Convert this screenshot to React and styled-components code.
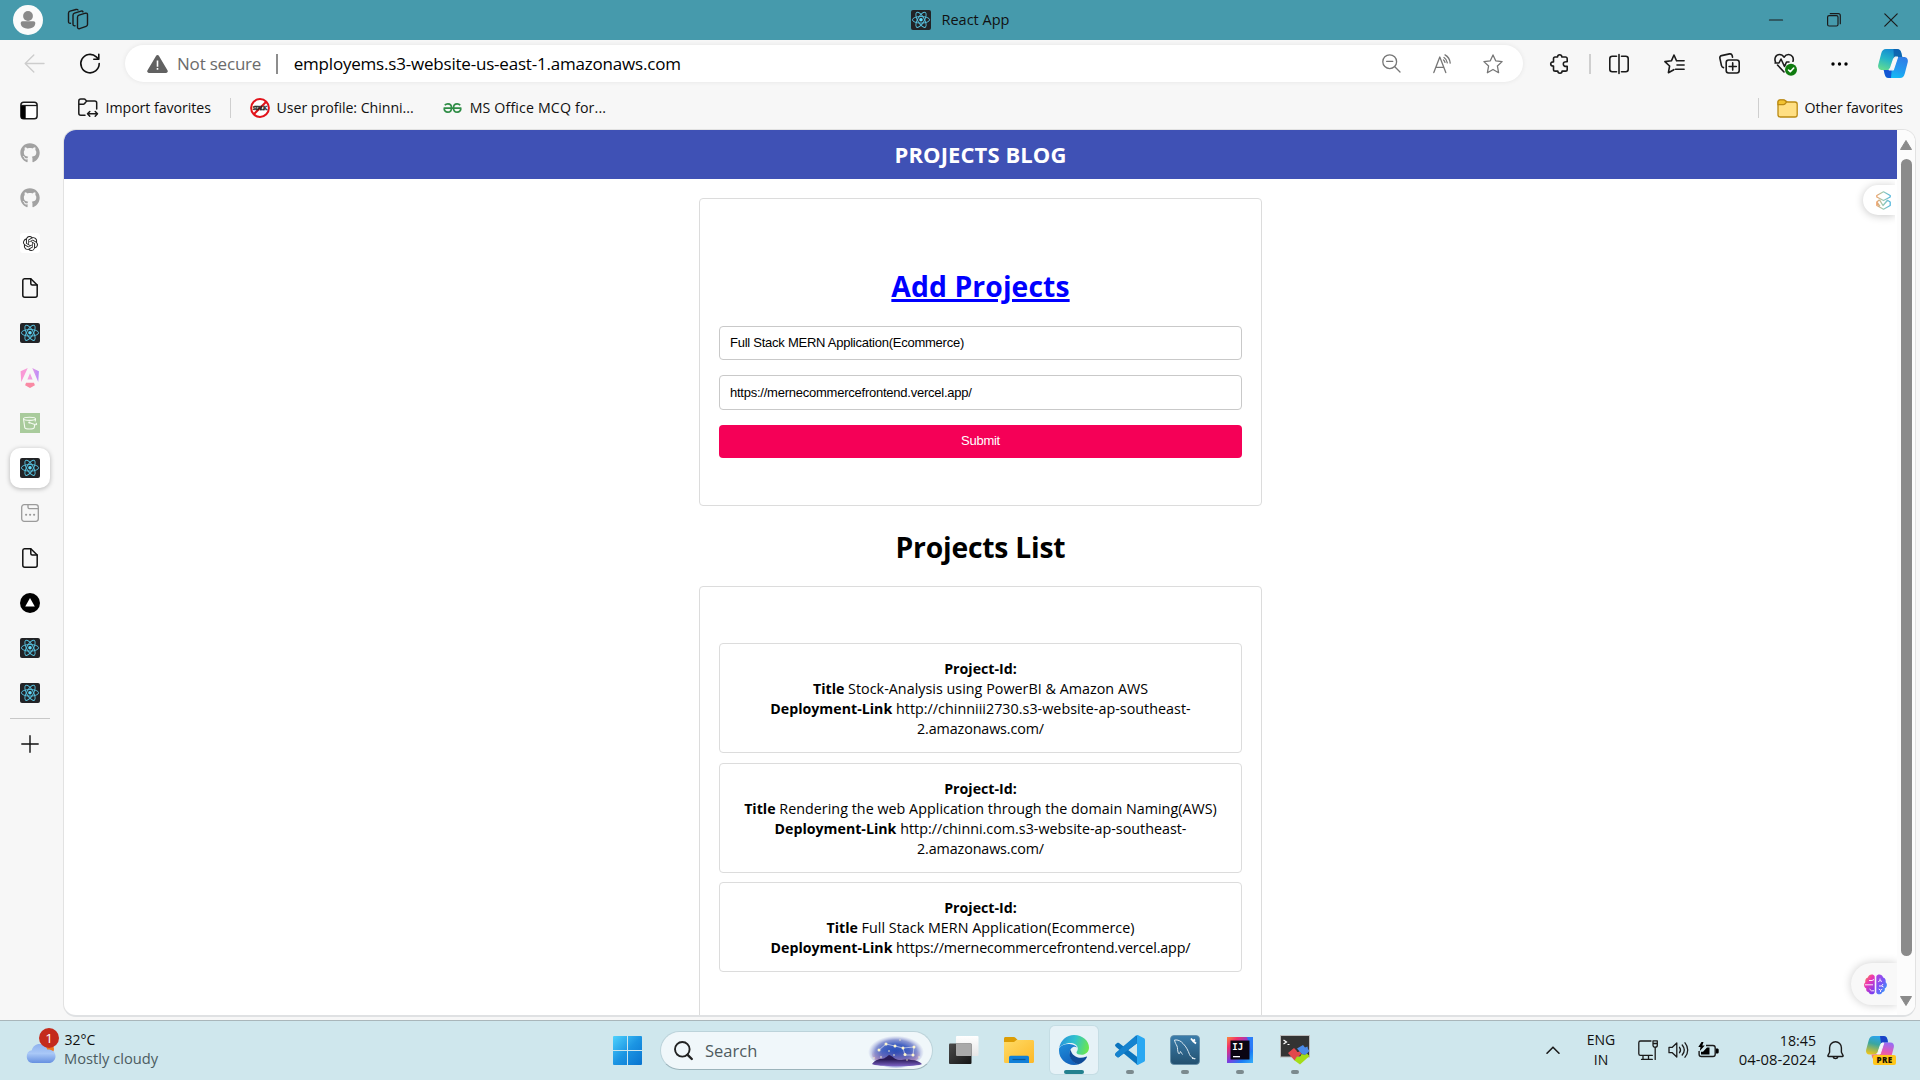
import React from "react";
import styled, { createGlobalStyle, css } from "styled-components";
import { FaGithub } from "react-icons/fa";
import { SiOpenai } from "react-icons/si";

const UI = '"Open Sans", "Noto Sans", sans-serif';

const Global = createGlobalStyle`
  *, *::before, *::after { box-sizing: border-box; }
  body { margin: 0; background: #f7f7f7; overflow: hidden; font-family: ${UI}; }
`;

const Window = styled.div`
  width: 1920px;
  height: 1080px;
  display: flex;
  flex-direction: column;
  overflow: hidden;
  background: #f7f7f7;
  color: #111;
`;

const Svg = styled.svg`
  flex: none;
  display: block;
  width: ${(p) => p.$w || 20}px;
  height: ${(p) => p.$h || p.$w || 20}px;
  margin-left: ${(p) => p.$ml || 0}px;
  overflow: visible;
`;

const Label = styled.span`
  flex: none;
  white-space: nowrap;
  font-size: ${(p) => p.$size || 14.2}px;
  letter-spacing: ${(p) => p.$ls || 0}px;
  color: ${(p) => p.$color || "#111"};
  margin-left: ${(p) => p.$ml || 0}px;
  padding-bottom: ${(p) => p.$pb || 0}px;
`;

const Rule = styled.i`
  flex: none;
  width: ${(p) => p.$w || 1}px;
  height: 20px;
  background: ${(p) => p.$color || "#cfcfcf"};
  margin-left: ${(p) => p.$ml || 0}px;
`;

const Spacer = styled.div`
  flex: 1;
`;

/* Title bar */
const TitleBar = styled.header`
  flex: none;
  height: 40px;
  background: #469aac;
  display: grid;
  grid-template-columns: 1fr auto 1fr;
  align-items: center;
`;
const TitleLeft = styled.div`
  display: flex;
  align-items: center;
  padding-left: 13px;
`;
const TitleCenter = styled.div`
  display: flex;
  align-items: center;
  gap: 11px;
`;
const TitleRight = styled.div`
  display: flex;
  align-items: center;
  justify-content: flex-end;
  gap: 43.500px;
  padding-right: 22px;
`;

/* Toolbar */
const Toolbar = styled.div`
  flex: none;
  height: 48px;
  display: flex;
  align-items: center;
  padding: 0 0 1px 24px;
`;
const AddressBar = styled.div`
  flex: none;
  width: 1398px;
  height: 37px;
  margin-left: 25px;
  border-radius: 19px;
  background: #fff;
  box-shadow: 0 0 5px rgba(0, 0, 0, 0.08);
  display: flex;
  align-items: center;
  padding: 0 20px 0 22px;
`;

/* Favorites bar */
const Favorites = styled.nav`
  flex: none;
  height: 42px;
  display: flex;
  align-items: center;
  padding: 0 17px 2px 20px;
`;

/* Body */
const Body = styled.div`
  flex: none;
  height: 890px;
  display: flex;
`;
const Sidebar = styled.aside`
  flex: none;
  width: 63px;
  display: flex;
  flex-direction: column;
  padding-left: 10px;
`;
const Tab = styled.div`
  flex: none;
  width: 40px;
  height: 40px;
  margin-top: ${(p) => (p.$first ? 3 : 5)}px;
  border-radius: 10px;
  display: flex;
  align-items: center;
  justify-content: center;
  ${(p) =>
    p.$active &&
    css`
      background: #fff;
      box-shadow: 0 1px 5px rgba(0, 0, 0, 0.28);
    `}
`;
const Faded = styled.span`
  display: flex;
  color: #a2a2a2;
  font-size: 20px;
`;
const AiBadge = styled.span`
  width: 20px;
  height: 20px;
  border-radius: 3px;
  background: #fff;
  display: flex;
  align-items: center;
  justify-content: center;
  font-size: 15px;
  color: #222;
`;
const SideRule = styled.div`
  width: 40px;
  height: 1px;
  margin: 5px 0 0;
  background: #c8c8c8;
`;
const NewTab = styled.div`
  width: 40px;
  margin-top: 16px;
  padding-right: 1px;
  display: flex;
  justify-content: center;
`;

const Page = styled.main`
  position: relative;
  width: 1853px;
  height: 888px;
  margin-top: -1px;
  border: 1px solid #e2e2e2;
  border-bottom: 2px solid #dfe1e3;
  border-radius: 13px;
  background: #fff;
  display: flex;
  overflow: hidden;
`;
const Viewport = styled.div`
  flex: none;
  width: 1833px;
  height: 885px;
  overflow: hidden;
  display: flex;
  flex-direction: column;
  align-items: center;
`;
const Banner = styled.h2`
  flex: none;
  align-self: stretch;
  height: 49px;
  margin: 0;
  background: #3f51b5;
  color: #fff;
  font-size: 22px;
  font-weight: 700;
  line-height: 48px;
  letter-spacing: 0.1px;
  text-align: center;
`;
const Card = styled.section`
  flex: none;
  width: 563px;
  height: ${(p) => p.$h}px;
  margin-top: ${(p) => p.$mt}px;
  padding: ${(p) => p.$pt}px 19px 0;
  border: 1px solid #dcdcdc;
  border-radius: 4px;
  background: #fff;
  display: flex;
  flex-direction: column;
`;
const Heading = styled.h1`
  margin: ${(p) => p.$mt || 0}px 0 0;
  height: 40px;
  line-height: 40px;
  font-size: 28.3px;
  font-weight: 700;
  text-align: center;
  letter-spacing: ${(p) => p.$ls || 0}px;
  color: ${(p) => (p.$link ? "#0000ff" : "#000")};
  ${(p) =>
    p.$link &&
    css`
      text-decoration: underline;
      text-decoration-thickness: 3px;
      text-underline-offset: 2px;
    `}
`;
const Field = styled.input`
  display: block;
  width: 523px;
  height: ${(p) => p.$h}px;
  margin: ${(p) => p.$mt}px 0 0;
  padding: 0 10px 1px;
  border: 1px solid #c9c9c9;
  border-radius: 4px;
  background: #fff;
  color: #000;
  font: 13px "Liberation Sans", Arial, sans-serif;
  letter-spacing: ${(p) => p.$ls}px;
`;
const Submit = styled.button`
  width: 523px;
  height: 33px;
  margin: 15px 0 0;
  padding: 0 0 2px;
  border: 0;
  border-radius: 4px;
  background: #f50057;
  color: #fff;
  font: 13px "Liberation Sans", Arial, sans-serif;
  letter-spacing: -0.25px;
`;
const Item = styled.article`
  flex: none;
  width: 523px;
  padding: 15px 15px 13px;
  margin-bottom: ${(p) => p.$mb}px;
  border: 1px solid #dcdcdc;
  border-radius: 4px;
  text-align: center;
  font-size: 14.3px;
  color: #000;
`;
const Line = styled.div`
  white-space: nowrap;
  height: 20px;
  line-height: 20px;
  letter-spacing: ${(p) => p.$ls || 0}px;
`;
const Bold = styled.strong`
  font-weight: 700;
  font-size: 14.2px;
  letter-spacing: 0;
`;

const Scrollbar = styled.div`
  flex: none;
  width: 18px;
  height: 885px;
  background: #fcfcfc;
  display: flex;
  flex-direction: column;
  align-items: center;
  padding: 10px 0 9px;
`;
const Thumb = styled.div`
  width: 11px;
  height: 797px;
  margin: 9px 0 40px;
  border-radius: 6px;
  background: #8b8b8b;
`;
const EdgeTag = styled.div`
  position: absolute;
  right: ${(p) => p.$right}px;
  top: ${(p) => p.$top}px;
  width: ${(p) => p.$w}px;
  height: ${(p) => p.$h}px;
  padding-left: ${(p) => p.$pl}px;
  border-radius: ${(p) => p.$h / 2}px 0 0 ${(p) => p.$h / 2}px;
  background: ${(p) => p.$bg};
  box-shadow: ${(p) => p.$shadow};
  clip-path: inset(-16px 0 -16px -16px);
  display: flex;
  align-items: center;
`;

/* Taskbar */
const Taskbar = styled.footer`
  flex: none;
  height: 60px;
  border-top: 1px solid #a9b6ba;
  background: #cfe7ed;
  display: flex;
  align-items: flex-start;
`;
const Weather = styled.div`
  position: relative;
  flex: none;
  width: 595px;
  height: 59px;
  padding: 9px 0 0 25px;
  display: flex;
  align-items: flex-start;
`;
const Stack = styled.div`
  display: flex;
  flex-direction: column;
  align-items: ${(p) => p.$align || "flex-start"};
  margin-left: ${(p) => p.$ml || 0}px;
  width: ${(p) => (p.$w ? p.$w + "px" : "auto")};
  line-height: ${(p) => p.$lh || 20}px;
  flex: none;
`;
const Alert = styled.b`
  position: absolute;
  left: 39px;
  top: 7px;
  width: 20px;
  height: 20px;
  border-radius: 50%;
  background: #c42b1c;
  color: #fff;
  font-size: 13.5px;
  font-weight: 400;
  line-height: 20px;
  text-align: center;
`;
const Slot = styled.div`
  position: relative;
  flex: none;
  width: ${(p) => p.$w || 55}px;
  height: 59px;
  display: flex;
  align-items: center;
  justify-content: center;
  padding: 0 ${(p) => p.$pr || 0}px ${(p) => p.$pb || 0}px 0;
`;
const ActiveTile = styled.div`
  width: 48px;
  height: 48px;
  border-radius: 5px;
  background: #e6f2f7;
  box-shadow: 0 0 0 1px rgba(190, 215, 222, 0.6);
  display: flex;
  align-items: center;
  justify-content: center;
`;
const Running = styled.i`
  position: absolute;
  left: 50%;
  bottom: 6px;
  width: ${(p) => p.$w || 8}px;
  height: 4px;
  border-radius: 2px;
  background: ${(p) => p.$color || "#7b8a8e"};
  transform: translateX(-50%);
`;
const SearchBox = styled.div`
  flex: none;
  width: 273px;
  height: 39px;
  margin-top: 10px;
  border-radius: 20px;
  background: #f0f7fa;
  border: 1px solid #bcd3da;
  border-bottom-color: #9cb4bb;
  display: flex;
  align-items: center;
  padding: 0 9px 0 13px;
`;
const Tray = styled.div`
  display: flex;
  align-items: center;
  height: 58px;
  flex: none;
`;
const PreviewLogo = styled.div`
  position: relative;
  width: 29px;
  height: 20px;
`;
const PreviewTag = styled.b`
  position: absolute;
  left: 7px;
  top: 19px;
  width: 23px;
  height: 10px;
  border-radius: 2px;
  background: #ffc61a;
  color: #1b1400;
  font-size: 8px;
  font-weight: 800;
  line-height: 10px;
  text-align: center;
  letter-spacing: 0.3px;
`;

const Stroke = ({ w = 20, h, ml, color = "#1b1b1b", sw = 1.4, children }) => (
  <Svg $w={w} $h={h} $ml={ml} viewBox={`0 0 ${w} ${h || w}`} fill="none" stroke={color} strokeWidth={sw} strokeLinecap="round" strokeLinejoin="round">
    {children}
  </Svg>
);

const ReactLogo = () => (
  <Svg $w={20} viewBox="0 0 20 20">
    <rect width="20" height="20" rx="2" fill="#222326" />
    <g fill="none" stroke="#56bfdc" strokeWidth="0.95">
      <ellipse cx="10" cy="9.8" rx="8.6" ry="3.3" />
      <ellipse cx="10" cy="9.8" rx="8.6" ry="3.3" transform="rotate(60 10 9.8)" />
      <ellipse cx="10" cy="9.8" rx="8.6" ry="3.3" transform="rotate(120 10 9.8)" />
    </g>
    <circle cx="10" cy="9.8" r="1.8" fill="#61dafb" />
  </Svg>
);

const FileIcon = () => (
  <Stroke w={20} sw={1.5} color="#111">
    <path d="M4.5.8h6.3L17.2 7v10.3a2 2 0 0 1-2 2H4.8a2 2 0 0 1-2-2V2.6a1.8 1.8 0 0 1 1.7-1.8Z" />
    <path d="M10.8.9v4.6a1.5 1.5 0 0 0 1.5 1.5h4.8" />
  </Stroke>
);

const CopilotLogo = ({ w, h, ml }) => (
  <Svg $w={w} $h={h} $ml={ml} viewBox="0 0 30 29">
    <defs>
      <linearGradient id="cpA" x1="0.6" y1="0" x2="0.2" y2="1">
        <stop offset="0" stopColor="#1387d2" />
        <stop offset="0.5" stopColor="#25b5c8" />
        <stop offset="1" stopColor="#63db90" />
      </linearGradient>
      <linearGradient id="cpB" x1="0.7" y1="0" x2="0.3" y2="1">
        <stop offset="0" stopColor="#2f7de6" />
        <stop offset="0.6" stopColor="#219df0" />
        <stop offset="1" stopColor="#12c0f5" />
      </linearGradient>
    </defs>
    <path d="M8 0h11c2.4 0 3.6 1.4 4.2 3.6L24.3 8H20c-1.8 0-2.8 1-3.3 2.6L14.5 17c-.8 2.6-1.8 4-4.5 4H4c-2.8 0-4.300-2.200-3.800-5L3.200 4.500C4 1.500 5.400 0 8 0Z" fill="url(#cpA)" />
    <path d="M15.5 0H19c2.400 0 3.600 1.400 4.200 3.600L24.300 8H20c-1.800 0-2.800 1-3.300 2.600L16 12.500Z" fill="#0b57a6" opacity=".75" />
    <path d="M22 29H11c-2.400 0-3.600-1.400-4.200-3.600L5.700 21H10c1.800 0 2.800-1 3.300-2.600L15.500 12c.8-2.600 1.800-4 4.500-4h6c2.800 0 4.300 2.200 3.800 5l-3 11.500C26 27.500 24.600 29 22 29Z" fill="url(#cpB)" />
    <path d="M11 29c-2.400 0-3.600-1.400-4.200-3.600L5.700 21H10c1.800 0 2.800-1 3.300-2.600l.7-1.900L13 29Z" fill="#1237c8" opacity=".75" />
    <path d="M17.200 8.200h2.300l-4.200 12.600h-4.100l1.300-1.600 3-9Z" fill="#f7f7f7" stroke="#f7f7f7" strokeWidth="1.200" strokeLinejoin="round" />
  </Svg>
);

const projects = [
  {
    gap: 10,
    title: "Stock-Analysis using PowerBI & Amazon AWS",
    link: ["http://chinniii2730.s3-website-ap-southeast-", "2.amazonaws.com/"],
    ls: 0.03,
  },
  {
    gap: 9,
    title: "Rendering the web Application through the domain Naming(AWS)",
    link: ["http://chinni.com.s3-website-ap-southeast-", "2.amazonaws.com/"],
    ls: 0.01,
  },
  {
    gap: 0,
    title: "Full Stack MERN Application(Ecommerce)",
    link: ["https://mernecommercefrontend.vercel.app/"],
    ls: -0.13,
  },
];

function TopBar() {
  return (
    <TitleBar>
      <TitleLeft>
        <Svg $w={30} viewBox="0 0 30 30">
          <circle cx="15" cy="15" r="15" fill="#fbfbfb" />
          <circle cx="15" cy="11" r="4.9" fill="#8a8a8a" />
          <path d="M9.5 16.300h11a1.800 1.800 0 0 1 1.800 1.800c0 3.600-3.300 5.700-7.300 5.700s-7.300-2.100-7.300-5.700a1.800 1.800 0 0 1 1.800-1.800Z" fill="#8a8a8a" />
        </Svg>
        <Stroke w={22} ml={24}>
          <path d="M10.5 8.200c0-1 .6-1.700 1.500-2l6.500-2c1.100-.3 2 .3 2 1.400v9.900c0 .9-.5 1.600-1.400 1.900l-6.500 2.200c-1.100.4-2.100-.2-2.100-1.400Z" />
          <path d="M8 16.800c-1.200.2-2-.4-2-1.500V6.200c0-1 .6-1.700 1.500-2l6.500-2c1-.3 1.700 0 2 .7" />
          <path d="M3.500 14.300c-1.200.2-2-.4-2-1.500V4.200c0-1 .6-1.700 1.500-2l6-1.700c1-.3 1.700 0 2 .5" />
        </Stroke>
      </TitleLeft>
      <TitleCenter>
        <ReactLogo />
        <Label $size={14.5} $pb={1}>React App</Label>
      </TitleCenter>
      <TitleRight>
        <Stroke w={14} sw={1.2}><path d="M.5 7h13" /></Stroke>
        <Stroke w={14} sw={1.2}>
          <rect x=".6" y="2.6" width="10.4" height="10.4" rx="1.5" />
          <path d="M3.300.7h8c1.200 0 2 .8 2 2v8" />
        </Stroke>
        <Stroke w={14} sw={1.2}><path d="M.8.8l12.400 12.400M13.200.8.8 13.200" /></Stroke>
      </TitleRight>
    </TitleBar>
  );
}

function AddressRow() {
  return (
    <Toolbar>
      <Stroke w={21} color="#cdcdcd"><path d="M20 10.500H1.200M9.800 2 1.200 10.500l8.600 8.500" /></Stroke>
      <Stroke w={20} h={21} ml={35} color="#111" sw={1.6}>
        <path d="M19.200 10.600A9.200 9.200 0 1 1 16.300 3.900l2.400 2.200M18.800 1.200v5h-5" />
      </Stroke>
      <AddressBar>
        <Svg $w={21} $h={18} viewBox="0 0 21 18">
          <path d="M9 .9a1.700 1.700 0 0 1 3 0l8.600 14.600a1.600 1.600 0 0 1-1.400 2.400H1.800a1.600 1.600 0 0 1-1.400-2.400Z" fill="#616161" />
          <path d="M9.700 5.500h1.600v6.200H9.700ZM9.700 13.100h1.600v1.700H9.700Z" fill="#fff" />
        </Svg>
        <Label $size={17} $ls={-0.2} $ml={9} $pb={1} $color="#6b6b6b">Not secure</Label>
        <Rule $w={2} $ml={15} $color="#8d8d8d" />
        <Label $size={17} $ls={-0.2} $ml={15.5} $pb={1} $color="#000">employems.s3-website-us-east-1.amazonaws.com</Label>
        <Spacer />
        <Stroke w={19} color="#767676" sw={1.3}>
          <circle cx="7.7" cy="7.7" r="6.9" />
          <path d="M12.800 12.800 18 18M4.600 7.300h6.200" />
        </Stroke>
        <Stroke w={20} ml={32} color="#767676" sw={1.3}>
          <path d="M.8 18.600 6.800 3l6 15.600M3 13.300h7.700M11 3.500c1.900 1.200 3 3 3.300 5.300M12 .9c3 1.700 4.900 4.500 5.200 8.200M10.500 6c.8.600 1.300 1.400 1.500 2.400" />
        </Stroke>
        <Stroke w={20} ml={30} color="#767676" sw={1.3}>
          <path d="M10 .9l2.700 5.900 6.400.8-4.700 4.400 1.200 6.700L10 15.500l-5.600 3.200 1.200-6.700L.9 7.600l6.400-.8Z" />
        </Stroke>
      </AddressBar>
      <Stroke w={20} ml={27} sw={1.6}>
        <path d="M5 3h2.600C7.500 1.600 8.400.8 9.700.8s2.200.8 2.100 2.200h3.700a1.700 1.700 0 0 1 1.700 1.700v3.100c-2.700-.4-3.900.7-3.900 2.300s1.200 2.600 3.900 2.200v3.100a1.700 1.700 0 0 1-1.700 1.700h-3.400c0 1.400-.9 2.200-2.100 2.200s-2.200-.8-2.200-2.200H5.200a1.700 1.700 0 0 1-1.700-1.700v-3.300C1.700 12.100.7 11.300.7 10s1-2.200 2.800-2.100V4.700C3.500 3.700 4.100 3 5 3Z" />
      </Stroke>
      <Rule $w={2} $ml={19} />
      <Stroke w={20} ml={18} sw={1.6}>
        <path d="M7.500 2.300H3.300C1.800 2.300.8 3.200.8 4.700v10.600c0 1.500 1 2.400 2.500 2.400h4.200M12.500 2.300h4.200c1.500 0 2.500.9 2.500 2.400v10.600c0 1.500-1 2.400-2.500 2.400h-4.200M10 .5v19" />
      </Stroke>
      <Stroke w={21} h={20} ml={35} sw={1.6}>
        <path d="M12.500 6.800 10 1 7.400 6.800.9 7.600l4.700 4.400-1.200 6.700 5.400-3M12.500 6.800h7.600M13 11h7.100M11.500 15.300h8.600" />
      </Stroke>
      <Stroke w={21} ml={34} sw={1.6}>
        <rect x="7.2" y="7" width="13" height="13" rx="2.5" />
        <path d="M13.700 9.900v7.200M10.100 13.500h7.200M4.500 14.600c-1.100-.2-1.700-.9-2-2L.9 5.400C.6 4 1.300 3 2.600 2.600L10.500.9c1.300-.3 2.300.4 2.700 1.700l.3 1.500" />
      </Stroke>
      <Stroke w={22} h={22} ml={34} sw={1.6}>
        <path d="M1.500 9C0 5.500 1.800 1.500 5.500 1.500c2.200 0 3.600 1.200 4.500 2.700 1-1.500 2.400-2.700 4.600-2.700 3.500 0 5.400 3.600 4.400 6.800M3.500 12l6.500 7M1 10h4l2-4 3.500 7.500 2-4.500H15" />
        <circle cx="17" cy="16.7" r="6" fill="#0f7b0f" stroke="none" />
        <path d="m14.500 17 1.800 1.700 3.400-3.700" stroke="#fff" />
      </Stroke>
      <Svg $w={17} $h={4} $ml={35} viewBox="0 0 17 4">
        <circle cx="2" cy="2" r="1.7" /><circle cx="8.5" cy="2" r="1.7" /><circle cx="15" cy="2" r="1.7" />
      </Svg>
      <CopilotLogo w={30} h={29} ml={30} />
    </Toolbar>
  );
}

function FavoritesBar() {
  return (
    <Favorites>
      <Svg $w={18} $h={23} viewBox="0 -4 18 23">
        <rect x=".9" y="1.2" width="16.2" height="16.6" rx="2.8" fill="#fff" stroke="#1b1b1b" strokeWidth="1.5" />
        <path d="M.9 4.500h4.800v13.300H3.500a2.600 2.600 0 0 1-2.600-2.600Z" />
        <path d="M1 4.500h16" stroke="#1b1b1b" strokeWidth="1.3" />
      </Svg>
      <Svg $w={20} $ml={40} viewBox="0 0 20 20" fill="none" stroke="#1b1b1b" strokeWidth="1.5" strokeLinecap="round" strokeLinejoin="round">
        <path d="M7 17.200H2.800c-1.200 0-2-.8-2-2V3.200c0-1.300.8-2.100 2-2.100h3.300c1.500 0 2 2 3.300 2h7.300c1.200 0 2 .8 2 2v6M.8 6.200h4.700c1.600 0 2-3.100 4-3.100" />
        <path d="M10 15.800h9.200M11.800 13.500 9.500 15.800l2.300 2.400M17.200 13.500l2.300 2.300-2.300 2.400" />
      </Svg>
      <Label $ml={7.5} $ls={-0.05} $pb={2}>Import favorites</Label>
      <Rule $ml={19} />
      <Svg $w={20} $ml={18.5} viewBox="0 0 20 20">
        <circle cx="10" cy="10" r="8.9" fill="#fff" stroke="#e2131b" strokeWidth="2" />
        <path d="M3.800 16.200 16.200 3.800" stroke="#e2131b" strokeWidth="2" />
        <text x="10" y="12.3" textAnchor="middle" fontFamily="Liberation Serif" fontWeight="700" fontSize="5.6" textLength="14.5" fill="#222" stroke="#222" strokeWidth=".3">STALK</text>
      </Svg>
      <Label $ml={7} $ls={-0.05} $pb={2}>User profile: Chinni...</Label>
      <Svg $w={19} $h={10} $ml={29} viewBox="0 0 19 10" fill="none" stroke="#2f8d46" strokeWidth="1.7">
        <path d="M.6 5.200h17.800M1.800 2.300C2.800.9 4 .8 4.900.8c2.200 0 3.600 1.700 3.600 4.100 0 2.600-1.500 4.200-3.700 4.200S1.300 7.600 1.100 5.400M17.200 2.300C16.200.9 15 .8 14.100.8c-2.200 0-3.600 1.700-3.600 4.100 0 2.600 1.500 4.200 3.700 4.200s3.500-1.500 3.700-3.700" />
      </Svg>
      <Label $ml={8} $ls={0.15} $pb={2}>MS Office MCQ for...</Label>
      <Spacer />
      <Rule />
      <Svg $w={21} $h={19} $ml={18} viewBox="0 0 21 19">
        <path d="M1 3.200C1 1.800 1.900 1 3.200 1h3.200C8.500 1 9 3 10.600 3H18c1.300 0 2.200.8 2.200 2.200v10.600c0 1.300-.9 2.200-2.200 2.200H3.200C1.900 18 1 17.100 1 15.800Z" fill="#ffdf83" stroke="#bb8a13" strokeWidth="1.3" />
        <path d="M1 3.200C1 1.800 1.900 1 3.200 1h3.200C8 1 8.600 2.300 9.600 3 8.500 4.500 7.800 5.600 6.400 5.600H1Z" fill="#f2c230" stroke="#bb8a13" strokeWidth="1.2" />
      </Svg>
      <Label $ml={7} $ls={-0.08} $pb={2}>Other favorites</Label>
    </Favorites>
  );
}

function Side() {
  return (
    <Sidebar>
      <Tab $first><Faded><FaGithub /></Faded></Tab>
      <Tab><Faded><FaGithub /></Faded></Tab>
      <Tab><AiBadge><SiOpenai /></AiBadge></Tab>
      <Tab><FileIcon /></Tab>
      <Tab><ReactLogo /></Tab>
      <Tab>
        <Svg $w={20} viewBox="0 0 24 24">
          <defs>
            <linearGradient id="ng" x1="0" y1=".2" x2="1" y2=".2">
              <stop offset="0" stopColor="#fb97d4" />
              <stop offset=".5" stopColor="#f5a0dc" />
              <stop offset="1" stopColor="#b98cfb" />
            </linearGradient>
          </defs>
          <path d="M14.700 0l8 3.999-.8 12.856ZM9.300 0 .7 3.999l.8 12.856ZM8.900 13.930h6.200L12 6.396Z" fill="url(#ng)" />
          <path d="M16.700 17.711H7.300l-1.200 2.916L12 24l5.900-3.373Z" fill="#f98aa4" />
        </Svg>
      </Tab>
      <Tab>
        <Svg $w={20} viewBox="0 0 20 20">
          <rect width="20" height="20" fill="#a9cb9c" />
          <g fill="none" stroke="#f4faf1" strokeWidth="1.1">
            <ellipse cx="9.5" cy="5.8" rx="6" ry="1.6" />
            <path d="M3.500 6l1.300 8.700c1 1.700 8.400 1.700 9.400 0L14.800 11M15.500 6l-.3 2.500M9 9.500l6.500 2.300c1.500.1 1.500-1 .2-1.700" />
          </g>
          <circle cx="9.3" cy="9.5" r="1.1" fill="#f4faf1" />
        </Svg>
      </Tab>
      <Tab $active><ReactLogo /></Tab>
      <Tab>
        <Stroke w={20} color="#9b9b9b" sw={1.3}>
          <rect x="1.7" y="1.7" width="16.6" height="16.6" rx="2.5" />
          <path d="M8 2v2.300c0 .9.500 1.400 1.400 1.400h8.600" />
          <path d="M6 11.700h.2M10 11.700h.2M14 11.700h.2" strokeWidth="2" />
        </Stroke>
      </Tab>
      <Tab><FileIcon /></Tab>
      <Tab>
        <Svg $w={20} viewBox="0 0 20 20">
          <circle cx="10" cy="10" r="10" />
          <path d="M10 5l4.800 8.500H5.200Z" fill="#fff" />
        </Svg>
      </Tab>
      <Tab><ReactLogo /></Tab>
      <Tab><ReactLogo /></Tab>
      <SideRule />
      <NewTab><Stroke w={18} color="#111"><path d="M9 .8v16.400M.8 9h16.400" /></Stroke></NewTab>
    </Sidebar>
  );
}

function BlogPage() {
  return (
    <Page>
      <Viewport>
        <Banner>PROJECTS BLOG</Banner>
        <Card $h={308} $mt={19} $pt={67}>
          <Heading $link $ls={0.1}>Add Projects</Heading>
          <Field $h={34} $mt={20} $ls={-0.25} defaultValue="Full Stack MERN Application(Ecommerce)" />
          <Field $h={35} $mt={15} $ls={-0.24} defaultValue="https://mernecommercefrontend.vercel.app/" />
          <Submit>Submit</Submit>
        </Card>
        <Heading $mt={21} $ls={-0.22}>Projects List</Heading>
        <Card $h={440} $mt={19} $pt={56}>
          {projects.map((p) => (
            <Item key={p.title} $mb={p.gap}>
              <Line><Bold>Project-Id:</Bold></Line>
              <Line $ls={0.03}><Bold>Title</Bold> {p.title}</Line>
              <Line $ls={p.ls}><Bold>Deployment-Link</Bold> {p.link[0]}</Line>
              {p.link[1] && <Line $ls={-0.1}>{p.link[1]}</Line>}
            </Item>
          ))}
        </Card>
      </Viewport>
      <Scrollbar>
        <Svg $w={12} $h={10} viewBox="0 0 12 10"><path d="M6 .5 11.500 9.500H.5Z" fill="#8b8b8b" stroke="#8b8b8b" strokeLinejoin="round" /></Svg>
        <Thumb />
        <Svg $w={12} $h={10} viewBox="0 0 12 10"><path d="M6 9.500 11.500.5H.5Z" fill="#8b8b8b" stroke="#8b8b8b" strokeLinejoin="round" /></Svg>
      </Scrollbar>
      <EdgeTag $right={20} $top={55} $w={32} $h={30} $pl={13} $bg="#fff" $shadow="0 1px 8px rgba(0,0,0,.22)">
        <Svg $w={15} $h={19} viewBox="0 0 15 19" fill="none" strokeWidth="1.3" strokeLinejoin="round">
          <defs>
            <linearGradient id="hex" x1="0" y1="0" x2="1" y2="0">
              <stop offset="0" stopColor="#efa36b" />
              <stop offset=".45" stopColor="#9ccbb4" />
              <stop offset="1" stopColor="#55b7dc" />
            </linearGradient>
          </defs>
          <g stroke="url(#hex)">
            <path d="M7.500.8 14.200 4.500V6L7.500 9.500.8 6V4.500Z" />
            <path d="M3.500 8.800.8 11v3.500l6.700 3.700 6.700-3.700V11l-2.700-1.700L7 14.500 3.500 8.800M.8 11 4 15.500" />
          </g>
        </Svg>
      </EdgeTag>
      <EdgeTag $right={18} $top={833} $w={46} $h={42} $pl={13} $bg="#f8f8f8" $shadow="0 0 10px rgba(0,0,0,.2)">
        <Svg $w={23} $h={21} viewBox="0 0 23 21">
          <defs>
            <linearGradient id="brL" x1="0" y1="0" x2=".7" y2="1">
              <stop offset="0" stopColor="#f79a2b" />
              <stop offset=".45" stopColor="#ee35b4" />
              <stop offset="1" stopColor="#7a3df0" />
            </linearGradient>
            <linearGradient id="brR" x1="0" y1="0" x2=".8" y2="1">
              <stop offset="0" stopColor="#b33fe0" />
              <stop offset=".5" stopColor="#7a55f5" />
              <stop offset="1" stopColor="#2ea0fb" />
            </linearGradient>
          </defs>
          <path d="M10.700 2.500v16C9.800 21 5.500 21 4.700 18.300c-1.900-.3-3-2-2.400-3.800C-.2 13.200-.6 9.800 1.300 8.200.9 5.800 2 4 3.900 3.600 4.500.2 9.500-.6 10.700 2.500Z" fill="url(#brL)" />
          <path d="M12.300 2.500v16c.9 2.500 5.200 2.500 6-.2 1.900-.3 3-2 2.400-3.800 2.500-1.300 2.900-4.700 1-6.300.4-2.400-.7-4.200-2.600-4.600-.6-3.400-5.600-4.200-6.800-1.100Z" fill="url(#brR)" />
          <path d="M5 6.500h3l2-1M1 10.800h8M5.500 15l2 1.800h2.500M16 4.500v2l-1.800 1.300M16 6.500l2 1M15 12h2.500l1.500-2M17.500 12l2 1M16.500 18v-1.800l-1.800-1.200M16.500 16.200l1.800-1" fill="none" stroke="#fbe9fb" strokeWidth="1" />
        </Svg>
      </EdgeTag>
    </Page>
  );
}

function SearchArt() {
  return (
    <Svg $w={54} $h={32} viewBox="0 0 54 32">
      <defs>
        <radialGradient id="sky" cx=".5" cy=".55" r=".5">
          <stop offset="0" stopColor="#2449b4" />
          <stop offset=".5" stopColor="#4563c2" />
          <stop offset=".75" stopColor="#7583cb" stopOpacity=".85" />
          <stop offset="1" stopColor="#a5a9dc" stopOpacity="0" />
        </radialGradient>
        <linearGradient id="glow" x1="0" y1="0" x2="0" y2="1">
          <stop offset=".35" stopColor="#9a6fb0" stopOpacity="0" />
          <stop offset="1" stopColor="#c2789f" stopOpacity=".85" />
        </linearGradient>
        <linearGradient id="hill" x1="0" y1="0" x2="0" y2="1">
          <stop offset=".4" stopColor="#2a1b57" />
          <stop offset="1" stopColor="#7d63c6" />
        </linearGradient>
      </defs>
      <ellipse cx="27" cy="16" rx="28" ry="17" fill="url(#sky)" />
      <ellipse cx="27" cy="19" rx="24" ry="12" fill="url(#glow)" />
      <path d="M3 29c3-4 5-4 8-5 4 0 5-1 9-4 4 1 6 5 10 5 5 0 8-1 12 0 5 0 9 2 11 4-3 3-47 3-50 0Z" fill="url(#hill)" />
      <path d="M10 15 17 9l9 2 8 2 11-1-1 8h-8l-2-7" fill="none" stroke="#d9dcf0" strokeWidth=".7" />
      <g fill="#fff6cc">
        <circle cx="10" cy="15" r="1.5" /><circle cx="17" cy="9" r="1.5" /><circle cx="26" cy="11" r="1.5" /><circle cx="34" cy="13" r="1.5" />
        <circle cx="45" cy="12" r="1.5" /><circle cx="44" cy="20" r="1.5" /><circle cx="36" cy="19.5" r="1.5" />
        <circle cx="20" cy="16" r=".8" /><circle cx="25" cy="20" r=".8" /><circle cx="5" cy="23" r=".8" /><circle cx="12" cy="22" r=".8" /><circle cx="38" cy="25" r=".7" /><circle cx="50" cy="22" r=".7" /><circle cx="31" cy="5" r=".7" />
      </g>
    </Svg>
  );
}

function StartButton() {
  return (
    <Slot $w={65} $pb={1}>
      <Svg $w={29} viewBox="0 0 29 29">
        <defs>
          <linearGradient id="win" gradientUnits="userSpaceOnUse" x1="0" y1="0" x2="29" y2="29">
            <stop offset="0" stopColor="#4fd2fd" />
            <stop offset=".5" stopColor="#1c95e3" />
            <stop offset="1" stopColor="#0873cf" />
          </linearGradient>
        </defs>
        <path d="M1 0h13v14H0V1a1 1 0 0 1 1-1ZM15 0h13a1 1 0 0 1 1 1v13H15ZM0 15h14v14H1a1 1 0 0 1-1-1ZM15 15h14v13a1 1 0 0 1-1 1H15Z" fill="url(#win)" />
      </Svg>
    </Slot>
  );
}

function Tasks() {
  return (
    <>
      <Slot $w={62} $pb={2}>
        <Svg $w={30} $h={28} viewBox="0 0 30 28">
          <defs>
            <linearGradient id="tv" x1="0" y1="0" x2="1" y2="1"><stop offset="0" stopColor="#4a4a4a" /><stop offset="1" stopColor="#151515" /></linearGradient>
            <linearGradient id="tw" x1="0" y1="0" x2="0" y2="1"><stop offset="0" stopColor="#fff" /><stop offset="1" stopColor="#e6e6e6" /></linearGradient>
          </defs>
          <rect x="7" y="0" width="22.5" height="20" rx="1" fill="url(#tw)" />
          <rect x="0" y="7.5" width="22.5" height="20.5" rx="1" fill="url(#tv)" />
          <path d="M7 7.500h15.500V20H8a1 1 0 0 1-1-1Z" fill="#a9a9a9" />
        </Svg>
      </Slot>
      <Slot $w={48} $pb={1}>
        <Svg $w={30} $h={26} viewBox="0 0 30 26">
          <defs><linearGradient id="fe" x1="0" y1="0" x2="1" y2="1"><stop offset="0" stopColor="#ffdb66" /><stop offset="1" stopColor="#fdb827" /></linearGradient></defs>
          <path d="M0 1.500C0 .6.6 0 1.500 0h8c1 0 1.600.4 2.200 1L14 3.500V7H0Z" fill="#dc9d05" />
          <path d="M0 5h10l2.500-2h16c.9 0 1.500.6 1.500 1.500v20c0 .9-.6 1.500-1.500 1.500h-27A1.500 1.500 0 0 1 0 24.500Z" fill="url(#fe)" />
          <path d="M5 26v-5.500c0-1 .7-1.700 1.700-1.700h16.600c1 0 1.700.7 1.700 1.700V26Z" fill="#1180d8" />
          <path d="M8.500 22.500h13" stroke="#0a5796" strokeWidth="1.2" />
        </Svg>
      </Slot>
      <Slot $w={62} $pb={1}>
        <ActiveTile>
          <Svg $w={30} viewBox="0 0 30 30">
            <defs>
              <linearGradient id="e1" x1="0" y1=".3" x2="1" y2=".5"><stop offset="0" stopColor="#2793dc" /><stop offset=".5" stopColor="#30c3cd" /><stop offset="1" stopColor="#6ae64f" /></linearGradient>
              <linearGradient id="e2" x1="0" y1="0" x2=".5" y2="1"><stop offset="0" stopColor="#1f8fdb" /><stop offset="1" stopColor="#1263bd" /></linearGradient>
            </defs>
            <path d="M.3 12.500C1.600 5.300 7.700 0 15 0c8.500 0 15 5.600 15 12.500 0 4.300-3.300 7.300-7.500 7.300-2.700 0-5-.8-5-2.200 0-1.100 1.300-1.600 1.300-4 0-3-2.800-5.600-7.300-5.600C6.500 8 2 10.500.3 12.500Z" fill="url(#e1)" />
            <path d="M.2 13C2 10.200 6.500 8.800 10.500 9c4 .2 6.500 1.900 7.600 3.500-3.500-2-7.300.7-7.300 5.500 0 5.500 4 11 10 10.800A15 15 0 0 1 15 30C6.700 30 0 23.500 0 15.500c0-.9.1-1.700.2-2.500Z" fill="url(#e2)" />
            <path d="M11.500 14.500c-2.800 6.500 1 13.500 8 14.800 4-1.200 6.700-3.800 8.300-6.800.4-.8-.2-1.200-.9-.8-6.500 3-14-.2-15.400-7.200Z" fill="#0f4b98" />
          </Svg>
        </ActiveTile>
        <Running $w={20} $color="#23818f" />
      </Slot>
      <Slot $w={49} $pb={1}>
        <Svg $w={30} viewBox="0 0 30 30">
          <path d="M0 10.500c0-.5.200-.9.600-1.200l1.500-1.300c.6-.5 1.300-.5 1.900 0L22 21.800v7.700L1 12Z" fill="#0b74be" />
          <path d="M0 19.500c0 .5.200.9.600 1.200L2.100 22c.6.500 1.300.5 1.900 0L22 8.200V.5L1 18Z" fill="#0a65a9" />
          <path d="M21.500 0 .8 17.800c-.8.800-.8 1.800 0 2.500L2.100 22c.6.500 1.300.5 1.900 0L22 8.200Z" fill="#1583cf" />
          <path d="M21.500.2c.4-.3.900-.3 1.300-.1l5.800 2.800c.9.400 1.400 1.200 1.400 2.200v19.800c0 1-.5 1.800-1.400 2.200l-5.800 2.800c-.5.200-1 .1-1.400-.2.300-.1.600-.4.600-1V1.300c0-.6-.2-.9-.5-1.100Z" fill="#2aa8f2" />
        </Svg>
        <Running />
      </Slot>
      <Slot $w={61} $pb={1}>
        <Svg $w={30} viewBox="0 0 30 30">
          <defs><linearGradient id="my" x1="0" y1="0" x2="0" y2="1"><stop offset="0" stopColor="#3b7dab" /><stop offset="1" stopColor="#23506f" /></linearGradient></defs>
          <rect x=".5" y=".5" width="29" height="29" rx="3.5" fill="url(#my)" stroke="#5f8aa6" strokeWidth=".8" />
          <path d="M4.500 5c3.500-.5 6.500 1 8.500 3.500 3.500 3.500 5 7 6.500 11 1 2.500 3 3 5.500 4.500M4.500 5c.5 2.800 1.700 4.500 2.500 6 .8 1.800.3 4.500 1.300 7 .8 1.600 1.700.3 2-1.500 1 .5 1 1.500 2.200 3M22 23.500l3.500.2" fill="none" stroke="#dbe7ef" strokeWidth="1" />
          <path d="M21 3.500l2 2.500 2-1.500M23 6l3 2.500" fill="none" stroke="#fff" strokeWidth="1.8" />
        </Svg>
        <Running />
      </Slot>
      <Slot $w={49} $pb={1}>
        <Svg $w={26} viewBox="0 0 26 26">
          <defs>
            <linearGradient id="ij" x1="0" y1="0" x2="1" y2="1"><stop offset="0" stopColor="#fb8a3c" /><stop offset=".22" stopColor="#f0306a" /><stop offset=".5" stopColor="#7a3fe0" /><stop offset=".75" stopColor="#1a7df5" /><stop offset="1" stopColor="#35b0fa" /></linearGradient>
          </defs>
          <rect width="26" height="26" fill="url(#ij)" />
          <path d="M20 0h6v14l-2-2Z" fill="#2b7df8" />
          <rect x="3.5" y="3.5" width="19" height="19" fill="#0a0512" />
          <text x="5.3" y="13" fontFamily="DejaVu Sans Mono" fontWeight="700" fontSize="9" fill="#fff">IJ</text>
          <rect x="6" y="19" width="7" height="1.3" fill="#fff" />
        </Svg>
        <Running />
      </Slot>
      <Slot $w={61} $pb={1}>
        <Svg $w={30} viewBox="0 0 30 30">
          <rect x=".5" y=".5" width="29" height="21.5" fill="#333" stroke="#bcbcbc" />
          <path d="M3.500 5 6.500 7l-3 2M7.500 9.500h2" fill="none" stroke="#fff" strokeWidth="1.2" />
          <path d="m8 18 6-5 2.500 2.500c.5 2 2.500 2 3 .5l2 2.500-3 3-1.500 3-2.500 1Z" fill="#e2484c" />
          <path d="m17 13.500 6-3.500 2 2.500 2.500-1 .5 2.500 1.500 2-4 4-3-.5-2.500-2.500Z" fill="#4b8ae8" />
          <path d="m14.500 25.500 2.500-4 3 .5 1.500-3 3.500 1 2-1.500 2.500 2.500L20 29.500Z" fill="#a4dd17" />
        </Svg>
        <Running />
      </Slot>
    </>
  );
}

function SystemTray() {
  return (
    <Tray>
      <Stroke w={14} h={8} sw={1.6}><path d="M1 7.200 7 1.200l6 6" /></Stroke>
      <Stack $align="center" $w={40} $ml={21}>
        <Label $size={14}>ENG</Label>
        <Label $size={14}>IN</Label>
      </Stack>
      <Stroke w={20} ml={17} sw={1.3}>
        <path d="M13 1H2.500C1.500 1 .8 1.700.8 2.700v11c0 1 .7 1.700 1.700 1.700h11.800M5 15.500v3.800M10.500 15.500v3.800M3.500 19.400h10.800M15 .8h4.300v4.400c0 1.200-.8 2-2.100 2s-2.200-.8-2.200-2ZM17.200 7.200v12.200M15 3.500h4.300" />
      </Stroke>
      <Stroke w={21} h={18} ml={10} sw={1.3}>
        <path d="M1 6.300h3.300L8.800 2v14l-4.500-4.300H1ZM11.500 6.300c1.200 1.600 1.200 3.800 0 5.400M14.200 4c2.500 3 2.500 7 0 10M17 1.800c3.600 4.200 3.600 10.200 0 14.400" />
      </Stroke>
      <Svg $w={21} $h={17} $ml={9} viewBox="0 0 21 17">
        <path d="M8 3.500h7c1.300 0 2.200.9 2.200 2.200v6.600c0 1.300-.9 2.200-2.200 2.200H3.300c-1.300 0-2.200-.9-2.200-2.200V9" fill="none" stroke="#1b1b1b" strokeWidth="1.4" />
        <path d="M18 6.500h1.200c.9 0 1.500.6 1.500 1.300v2.400c0 .7-.6 1.300-1.500 1.300H18Z" />
        <path d="M9 5.500h2.500v7H3V9.800h2Z" />
        <path d="M3.500 0 .3 5h2.200L1.800 9 6.800 3.500H4.300L5.500 0Z" />
      </Svg>
      <Stack $align="flex-end" $w={97} $lh={19.4}>
        <Label $size={14.2}>18:45</Label>
        <Label $size={14.8}>04-08-2024</Label>
      </Stack>
      <Stroke w={17} h={19} ml={11}>
        <path d="M8.500.8a5.900 5.900 0 0 0-5.900 5.900v4.500L.9 14.600c-.2.400.1.900.6.900h14c.5 0 .8-.5.600-.9l-1.700-3.400V6.700A5.900 5.900 0 0 0 8.500.8ZM6 15.700a2.600 2.600 0 0 0 5 0" />
      </Stroke>
      <Slot $w={76} $pr={3} $pb={8}>
        <PreviewLogo>
          <Svg $w={28} $h={24} viewBox="0 0 28 24">
            <defs>
              <linearGradient id="pa" x1=".6" y1="0" x2=".3" y2="1"><stop offset="0" stopColor="#2aa4f4" /><stop offset=".45" stopColor="#3aa6a0" /><stop offset="1" stopColor="#e9c41c" /></linearGradient>
              <linearGradient id="pb" x1=".6" y1="0" x2=".3" y2="1"><stop offset="0" stopColor="#9b6cf2" /><stop offset=".5" stopColor="#e857b4" /><stop offset="1" stopColor="#fb8a5c" /></linearGradient>
            </defs>
            <path d="M7.500 0h10c2 0 3.300 1.200 3.800 3L22 6.500h-4c-1.500 0-2.300.8-2.800 2.200L13 15c-.8 2.500-1.700 3.500-4 3.500H3.500C1 18.500-.4 16.500.1 14L2.800 4C3.600 1.300 5 0 7.500 0Z" fill="url(#pa)" />
            <path d="M14 0h3.500c2 0 3.300 1.200 3.800 3L22 6.500h-4c-1.500 0-2.300.8-2.800 2.200Z" fill="#1a43c8" />
            <path d="M9 18.500c2.300 0 3.200-1 4-3.500l2.200-6.300c.5-1.400 1.300-2.200 2.800-2.200h6.500c2.500 0 3.900 2 3.400 4.500L25.500 20c-.6 2.500-2 4-4 4H10c-2 0-3.500-1-4-3l-.5-2.500Z" fill="url(#pb)" />
            <path d="M15.800 7h2l-3.600 11h-3.500l1.300-1.700 2.600-7.800Z" fill="#f3f7fb" stroke="#f3f7fb" strokeWidth="1" strokeLinejoin="round" />
          </Svg>
          <PreviewTag>PRE</PreviewTag>
        </PreviewLogo>
      </Slot>
    </Tray>
  );
}

export default function App() {
  return (
    <Window>
      <Global />
      <TopBar />
      <AddressRow />
      <FavoritesBar />
      <Body>
        <Side />
        <BlogPage />
      </Body>
      <Taskbar>
        <Weather>
          <Svg $w={31} $h={34} viewBox="0 0 31 34">
            <defs><linearGradient id="cl" x1="0" y1="0" x2="0" y2="1"><stop offset="0" stopColor="#8fb2ee" /><stop offset=".5" stopColor="#a9c8f7" /><stop offset="1" stopColor="#6690e0" /></linearGradient></defs>
            <g transform="translate(0 14)">
              <circle cx="24" cy="5" r="5" fill="#f0741c" />
              <path d="M7.500 19A6.500 6.500 0 0 1 6.800 6.200C7.800 2.500 10.800 0 14.500 0c3.800 0 6.800 2.300 7.800 5.500 4.500-.3 8.200 2.500 8.200 6.700 0 3.900-3 6.800-6.800 6.800Z" fill="url(#cl)" />
            </g>
          </Svg>
          <Alert>1</Alert>
          <Stack $ml={8} $lh={19.4}>
            <Label $size={14} $ml={0.5}>32°C</Label>
            <Label $size={14.7} $color="#4c5c61">Mostly cloudy</Label>
          </Stack>
        </Weather>
        <StartButton />
        <SearchBox>
          <Svg $w={19} $h={19} viewBox="0 0 19 19" fill="none" stroke="#222" strokeLinecap="round">
            <circle cx="8.3" cy="8.3" r="7.3" strokeWidth="1.9" />
            <path d="m13.600 13.800 4.200 4.200" strokeWidth="2.4" />
          </Svg>
          <Label $size={16.5} $ml={12} $color="#4f5b60">Search</Label>
          <Spacer />
          <SearchArt />
        </SearchBox>
        <Tasks />
        <Spacer />
        <SystemTray />
      </Taskbar>
    </Window>
  );
}
